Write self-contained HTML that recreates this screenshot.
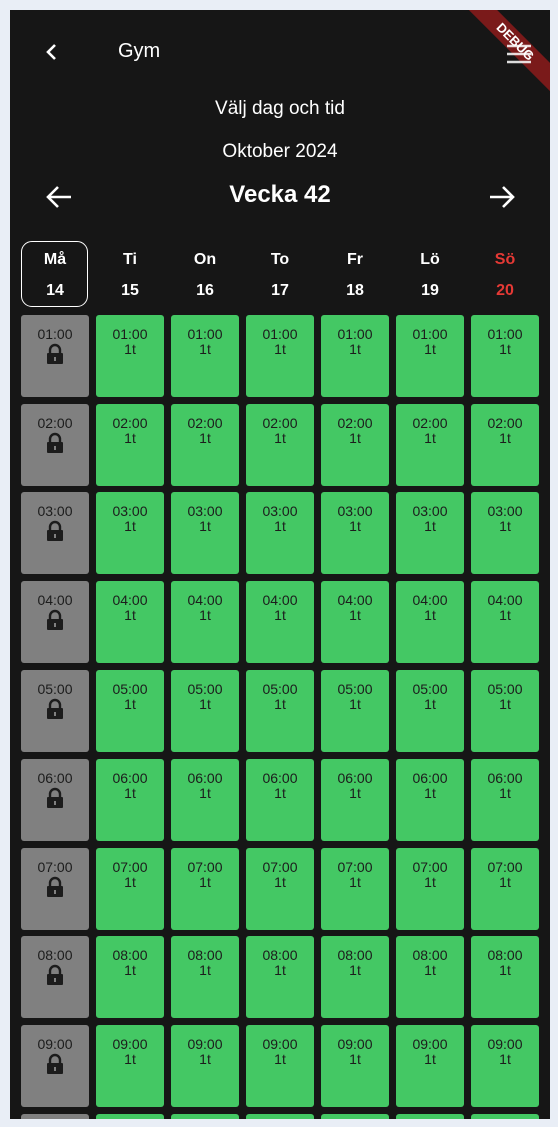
<!DOCTYPE html>
<html><head><style>
body{margin:0;width:558px;height:1127px;background:#e9eef6;overflow:hidden;font-family:"Liberation Sans",sans-serif;position:relative}
#p{position:absolute;left:10px;top:10px;width:540px;height:1109px;background:#161616;overflow:hidden}
.t{position:absolute;color:#fff;white-space:nowrap}
.c{position:absolute;width:68px;height:82px;border-radius:3px;background:#44c864;color:#1c1c1c;text-align:center;font-size:14px;line-height:15px}
.c.g{background:#808080}
.c div{margin-top:12px}
.d{position:absolute;width:68px;text-align:center;color:#fff;font-weight:bold;font-size:16px;top:234px}
.d span{display:block;line-height:31px}
</style></head><body>
<div id="p">
<svg style="position:absolute;left:34px;top:33px" width="16" height="18"><path d="M11 2L4 9l7 7" stroke="#fff" stroke-width="2.6" fill="none"/></svg>
<div class="t" style="left:108px;top:30px;font-size:20px">Gym</div>
<div style="position:absolute;left:440px;top:22px;width:130px;height:20px;background:#7a1a1a;transform:rotate(45deg);color:#fff;font-size:13px;font-weight:bold;text-align:center;line-height:20px">DEBUG</div>
<svg style="position:absolute;left:496px;top:33px;opacity:.85" width="26" height="22"><path d="M1 3h24M1 11h24M1 19h24" stroke="#fff" stroke-width="2.5"/></svg>
<div class="t" style="left:0;width:540px;text-align:center;top:88px;font-size:19px">Välj dag och tid</div>
<div class="t" style="left:0;width:540px;text-align:center;top:131px;font-size:19px">Oktober 2024</div>
<svg style="position:absolute;left:35px;top:174px" width="28" height="26"><path d="M26 13H3M13 3L3 13l10 10" stroke="#fff" stroke-width="2.6" fill="none"/></svg>
<svg style="position:absolute;left:478px;top:174px" width="28" height="26"><path d="M2 13h23M15 3l10 10-10 10" stroke="#fff" stroke-width="2.6" fill="none"/></svg>
<div class="t" style="left:0;width:540px;text-align:center;top:171px;font-size:24px;font-weight:bold">Vecka 42</div>
<div style="position:absolute;left:11px;top:231px;width:65px;height:64px;border:1.5px solid #fff;border-radius:11px"></div>
<div class="d" style="left:11px"><span>Må</span><span>14</span></div>
<div class="d" style="left:86px"><span>Ti</span><span>15</span></div>
<div class="d" style="left:161px"><span>On</span><span>16</span></div>
<div class="d" style="left:236px"><span>To</span><span>17</span></div>
<div class="d" style="left:311px"><span>Fr</span><span>18</span></div>
<div class="d" style="left:386px"><span>Lö</span><span>19</span></div>
<div class="d" style="left:461px;color:#e53935"><span>Sö</span><span>20</span></div>
<div id="g"></div>
</div>
<script>
var h='';var tops=[305,394,482,571,660,749,838,926,1015,1104];
for(var r=0;r<10;r++){var tm=(r<9?'0'+(r+1):'10')+':00';for(var c=0;c<7;c++){var l=11+c*75;
if(r==9)h+='<div class="c'+(c==0?' g':'')+'" style="left:'+l+'px;top:'+tops[r]+'px;height:5px;border-radius:3px 3px 0 0"></div>';
else if(c==0)h+='<div class="c g" style="left:'+l+'px;top:'+tops[r]+'px"><div>'+tm+'</div><svg width="20" height="22" style="margin-top:1px"><path d="M5 10V7a5 5 0 0 1 10 0v3" stroke="#1c1c1c" stroke-width="2.4" fill="none"/><rect x="2" y="10" width="16" height="11" rx="1" fill="#1c1c1c"/><rect x="9" y="14" width="2" height="4" fill="#808080"/></svg></div>';
else h+='<div class="c" style="left:'+l+'px;top:'+tops[r]+'px"><div>'+tm+'<br>1t</div></div>';}}
document.getElementById('g').innerHTML=h;
</script>
</body></html>
